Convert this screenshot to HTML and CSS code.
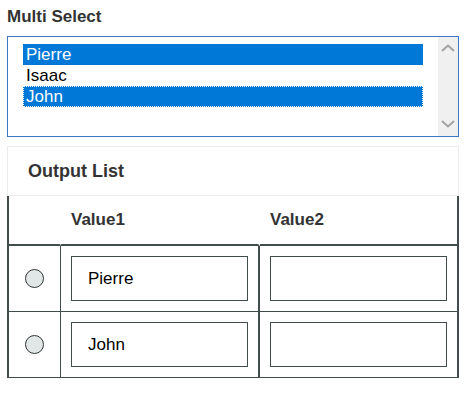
FILE: index.html
```html
<!DOCTYPE html>
<html lang="en">
<head>
  <meta charset="UTF-8">
  <meta name="viewport" content="width=device-width, initial-scale=1.0">
  <title>Multi Select Output</title>
  <link rel="stylesheet" href="styles.css">
</head>
<body>
  <div class="page">
    <label class="field-label">Multi Select</label>
    <div class="listbox">
      <div class="options">
        <div class="option selected">Pierre</div>
        <div class="option">Isaac</div>
        <div class="option selected focused">John</div>
      </div>
      <div class="scrollbar">
        <svg width="14" height="8" viewBox="0 0 14 8"><path d="M1 7 L7 1.5 L13 7" fill="none" stroke="#a3a3a3" stroke-width="2"/></svg>
        <svg width="14" height="8" viewBox="0 0 14 8"><path d="M1 1 L7 6.5 L13 1" fill="none" stroke="#a3a3a3" stroke-width="2"/></svg>
      </div>
    </div>

    <div class="panel">
      <h2 class="panel-title">Output List</h2>
    </div>

    <table class="output">
      <colgroup>
        <col class="col-pick">
        <col class="col-value">
        <col class="col-value">
      </colgroup>
      <thead>
        <tr>
          <th></th>
          <th>Value1</th>
          <th>Value2</th>
        </tr>
      </thead>
      <tbody>
        <tr>
          <td><input type="radio" name="pick" class="radio"></td>
          <td><input type="text" class="cell-input" value="Pierre"></td>
          <td><input type="text" class="cell-input" value=""></td>
        </tr>
        <tr class="last">
          <td><input type="radio" name="pick" class="radio"></td>
          <td><input type="text" class="cell-input" value="John"></td>
          <td><input type="text" class="cell-input" value=""></td>
        </tr>
      </tbody>
    </table>
  </div>
</body>
</html>
```

FILE: styles.css
```css
body {
  margin: 0;
  background: #fff;
  font-family: "Liberation Sans", Arial, sans-serif;
  color: #333;
}

.page {
  width: 452px;
  padding: 7px 7px;
}

.field-label {
  display: block;
  font-size: 17px;
  font-weight: bold;
  line-height: 20px;
  margin-bottom: 9px;
}

.listbox {
  display: flex;
  height: 101px;
  box-sizing: border-box;
  border: 1px solid #3b78c3;
}

.options {
  flex: 1;
  padding: 7px 15px;
}

.option {
  height: 21px;
  line-height: 21px;
  padding: 0 3px;
  font-size: 17px;
  color: #000;
}

.option.selected {
  background-color: #0078d7;
  color: #fff;
}

.option.focused {
  outline: 1px dotted #fff;
  outline-offset: -1px;
}

.scrollbar {
  width: 20px;
  background-color: #f0f0f0;
  display: flex;
  flex-direction: column;
  justify-content: space-between;
  align-items: center;
  padding: 7px 0 8px;
  box-sizing: border-box;
}

.panel {
  margin-top: 9px;
  height: 50px;
  box-sizing: border-box;
  border: 1px solid #ececec;
  display: flex;
  align-items: center;
}

.panel-title {
  margin: 0;
  padding-left: 20px;
  font-size: 18px;
  font-weight: bold;
  color: #333;
}

.output {
  width: 452px;
  table-layout: fixed;
  border-collapse: separate;
  border-spacing: 0;
}

.col-pick {
  width: 54px;
}

.col-value {
  width: 199px;
}

.output th,
.output td {
  box-sizing: border-box;
  padding: 0 10px;
  border-right: 2px solid #434c4c;
}

.output th:first-child,
.output td:first-child {
  border-left: 2px solid #434c4c;
  border-right-width: 1px;
  padding: 0;
}

.output th {
  height: 50px;
  text-align: left;
  font-size: 17px;
  font-weight: bold;
  color: #333;
  border-bottom: 2px solid #434c4c;
}

/* header row only keeps the outer edges */
.output th:first-child {
  border-right: 1px solid transparent;
}

.output th:nth-child(2) {
  border-right: 2px solid transparent;
}

.output td {
  height: 66px;
  padding-top: 10px;
  padding-bottom: 10px;
  border-bottom: 1px solid #434c4c;
}

.output tr.last td {
  height: 66px;
}

.radio {
  appearance: none;
  display: block;
  width: 19px;
  height: 19px;
  margin: 0 auto;
  box-sizing: border-box;
  border: 1.5px solid #2f3535;
  border-radius: 50%;
  background-color: #e1e7e7;
}

.cell-input {
  display: block;
  width: 100%;
  height: 45px;
  box-sizing: border-box;
  border: 1px solid #434c4c;
  padding: 0 16px;
  font-family: "Liberation Sans", Arial, sans-serif;
  font-size: 17px;
  color: #000;
  outline: none;
}
```
